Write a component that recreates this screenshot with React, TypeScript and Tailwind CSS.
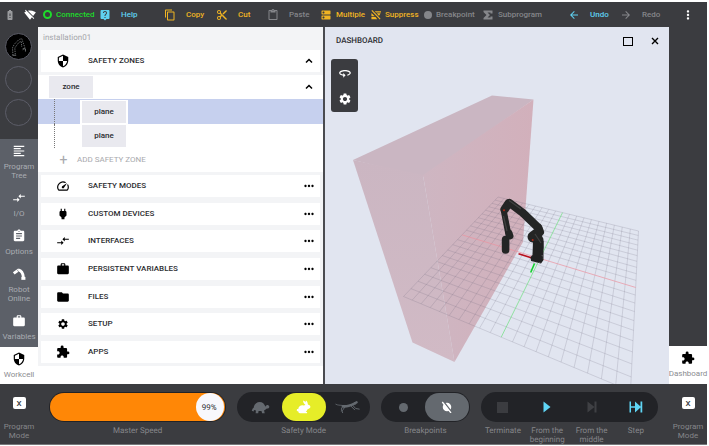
import type { ReactNode } from "react";
import {
  MdArrowBack,
  MdArrowForward,
  MdAssignment,
  MdBatteryAlert,
  MdCompareArrows,
  MdContentCut,
  MdContentPaste,
  MdDns,
  MdExtension,
  MdFolder,
  MdFormatAlignLeft,
  MdLiveHelp,
  MdMoreHoriz,
  MdMoreVert,
  MdOutlineContentCopy,
  MdPower,
  MdSecurity,
  MdSettings,
  MdSignalWifiOff,
  MdSpeed,
  MdWork,
} from "react-icons/md";

type Point = [number, number];

const FRONT_LEFT: Point = [403.5, 296.5];
const BACK_LEFT: Point = [498, 197];
const BACK_RIGHT: Point = [638.5, 231];
const FRONT_RIGHT: Point = [630.5, 391];

/* Projects floor coordinates (0..1, 0..1) onto the view. */
function project(u: number, v: number): Point {
  const [x0, y0] = FRONT_LEFT;
  const [x1, y1] = FRONT_RIGHT;
  const [x2, y2] = BACK_RIGHT;
  const [x3, y3] = BACK_LEFT;
  const dx1 = x1 - x2;
  const dx2 = x3 - x2;
  const dx3 = x0 - x1 + x2 - x3;
  const dy1 = y1 - y2;
  const dy2 = y3 - y2;
  const dy3 = y0 - y1 + y2 - y3;
  const det = dx1 * dy2 - dx2 * dy1;
  const g = (dx3 * dy2 - dx2 * dy3) / det;
  const h = (dx1 * dy3 - dx3 * dy1) / det;
  const w = g * u + h * v + 1;
  return [
    ((x1 - x0 + g * x1) * u + (x3 - x0 + h * x3) * v + x0) / w,
    ((y1 - y0 + g * y1) * u + (y3 - y0 + h * y3) * v + y0) / w,
  ];
}

function FloorLine({ from, to, color }: { from: Point; to: Point; color: string }) {
  const a = project(from[0], from[1]);
  const b = project(to[0], to[1]);
  return <line x1={a[0]} y1={a[1]} x2={b[0]} y2={b[1]} stroke={color} strokeWidth="0.7" />;
}

function Scene() {
  const steps = Array.from({ length: 21 }, (_, i) => i).filter((i) => i !== 10);
  const grid = "rgba(105,100,120,0.28)";
  return (
    <svg
      className="absolute inset-0 h-full w-full"
      viewBox="325 27 344 357"
      preserveAspectRatio="xMidYMid meet"
      role="img"
      aria-label="Robot workcell view"
    >
      <defs>
        <linearGradient id="side" x1="0" y1="0" x2="1" y2="0">
          <stop offset="0" stopColor="#ceb6c2" />
          <stop offset="1" stopColor="#d2b0bb" />
        </linearGradient>
        <linearGradient id="front" x1="0" y1="0" x2="0" y2="1">
          <stop offset="0" stopColor="#cbb6c2" />
          <stop offset="1" stopColor="#d1bac5" />
        </linearGradient>
      </defs>
      <path d="M353 160 492 95.5 533.5 99.5 423 177Z" fill="#cab6c2" />
      <path d="M353 160 423 175 454.5 362 412.5 342.5Z" fill="url(#front)" />
      <path d="M423 175 533.5 99.5 523 242 454.5 362Z" fill="url(#side)" />
      {steps.map((i) => (
        <g key={i}>
          <FloorLine from={[i / 20, 0]} to={[i / 20, 1]} color={grid} />
          <FloorLine from={[0, i / 20]} to={[1, i / 20]} color={grid} />
        </g>
      ))}
      <FloorLine from={[0, 0.5]} to={[1, 0.5]} color="#eb929f" />
      <FloorLine from={[0.5, 0]} to={[0.5, 1]} color="#6fe07f" />
      <path d="M518.5 253.7 532 258" stroke="#b80f1c" strokeWidth="1.6" />
      <path d="M534.5 263.5 530.7 272.5" stroke="#10d42b" strokeWidth="1.6" />
      <g fill="none" stroke="#242525" strokeLinecap="round" strokeLinejoin="round">
        <path d="M505.6 239.5V250" strokeWidth="7.6" />
        <path d="M504 212 508.5 235" strokeWidth="6" />
        <path d="M509 233 510 236" strokeWidth="7" />
        <path d="M504.5 209.5 508.5 203.5" strokeWidth="8.5" />
        <path d="M509.5 203 523 213 538 227.5" strokeWidth="8" />
        <path d="M538.5 228 540 232" strokeWidth="8" />
        <path d="M533 237 537 234" strokeWidth="11" />
        <path d="M538.5 240V248" strokeWidth="10" />
      </g>
      <path d="M533 241H543.5V260L541 263.5 531 261 530.5 257 532.5 255Z" fill="#202121" />
      <path d="M509 200.5 521 209M535 234 541 243M503.5 216 507 231" stroke="#414242" strokeWidth="1.2" fill="none" />
      <circle cx="504" cy="210.3" r="1" fill="#b02a17" />
      <circle cx="532.7" cy="240" r="1" fill="#b02a17" />
      <path d="M533 262 541 263M542 255 543.5 259" stroke="#8b8b8e" strokeWidth="0.6" strokeDasharray="1.5 1.5" />
    </svg>
  );
}

function RotateIcon() {
  return (
    <svg viewBox="0 0 24 24" className="size-3.5" fill="currentColor" aria-hidden="true">
      <path d="M12 7C6.480 7 2 9.240 2 12c0 2.240 2.940 4.130 7 4.770V20l4-4-4-4v2.730c-3.150-.560-5-1.900-5-2.730 0-1.060 3.040-3 8-3s8 1.940 8 3c0 .730-1.460 1.890-4 2.530v2.050c3.530-.770 6-2.530 6-4.580 0-2.760-4.480-5-10-5z" />
    </svg>
  );
}

function SigmaIcon() {
  return (
    <svg viewBox="0 0 24 24" className="size-3" fill="currentColor" aria-hidden="true">
      <path d="M3 3H21V9H17V7H11L16 12 11 17H17V15H21V21H3V18L9 12 3 6Z" />
    </svg>
  );
}

function CloseIcon() {
  return (
    <svg viewBox="0 0 12 12" className="size-3" stroke="black" strokeWidth="1.4" aria-hidden="true">
      <path d="M3 3 9 9M9 3 3 9" />
    </svg>
  );
}

function SuppressIcon() {
  return (
    <svg viewBox="0 0 24 24" className="size-2.5" fill="currentColor" aria-hidden="true">
      <path d="M1 2 3 0 23 21 21 23Z" />
      <path d="M9 3H24V6H12ZM14 8H23L20 13H18ZM1 7 9 15H1ZM1 17H11L15 22H1Z" />
    </svg>
  );
}

function RobotArmIcon() {
  return (
    <svg viewBox="0 0 24 24" className="size-3.5" aria-hidden="true">
      <path d="M3 11 12 4.500" stroke="#fff" strokeWidth="5" />
      <path d="M11 5C16 6 19 12 19.500 18" stroke="#fff" strokeWidth="5" fill="none" />
      <path d="M16 17H23V22H16Z" fill="#fff" />
      <path d="M8.500 4.500 12 9" stroke="#5c6068" strokeWidth="1" />
    </svg>
  );
}

function RobotSketch() {
  return (
    <svg viewBox="0 0 27 27" className="size-full" aria-hidden="true" fill="none" stroke="#9fa3a6" strokeWidth="0.7">
      <path d="M7.500 23 7 15 9 11 14 6 17 5 18 8 20.500 15 18 17M10 22 9.500 15 14 9 16.500 8 17 14" strokeDasharray="1.5 1" />
      <path d="M7 23H11M18 16H21V19" />
    </svg>
  );
}

function TortoiseIcon() {
  return (
    <svg viewBox="0 0 56 40" className="h-[13px] w-[19px]" fill="#64696f" aria-hidden="true">
      <path d="M7 21C8 10 16 3 25 3 34 3 41 9 43 18 45 13 49 11 52 13 56 15 56 20 53 22L46 24C44 27 42 28 39 29L41 38H33L31 31H22L21 38H13L14 29 8 28 7 32 1 30 4 23Z" />
    </svg>
  );
}

function RabbitIcon() {
  return (
    <svg viewBox="0 0 48 44" className="h-[14px] w-[15px]" fill="#fff" aria-hidden="true">
      <path d="M23 1C28 2 31 7 33 12 30 8 30 3 32 1 36 4 38 9 38 14 43 15 47 19 46 23 45 27 39 28 37 29 36 33 33 35 31 36L36 39 35 42H13C8 41 7 38 8 36 3 36 1 33 3 30 4 28 6 29 7 29 8 20 16 15 24 17 27 17 29 16 30 15 26 12 22 6 23 1Z" />
    </svg>
  );
}

function CheetahIcon() {
  return (
    <svg viewBox="0 0 76 40" className="h-[13px] w-[25px]" fill="none" stroke="#64696f" strokeLinecap="round" strokeLinejoin="round" aria-hidden="true">
      <path d="M2 10C8 14 14 12 24 14" strokeWidth="2.500" />
      <path d="M24 16C36 19 48 13 61 7" strokeWidth="8" />
      <path d="M61 7 66 4" strokeWidth="7" />
      <path d="M23 17 19 25 23 36M29 19 25 26 20 31" strokeWidth="3" />
      <path d="M54 13 63 23 74 25M49 16 60 27" strokeWidth="3" />
    </svg>
  );
}

function BreakpointOffIcon() {
  return (
    <svg viewBox="0 0 24 24" className="size-3" aria-hidden="true">
      <circle cx="12" cy="12" r="8.500" fill="#fff" />
      <path d="M5 1 22 23" stroke="#64696f" strokeWidth="3" />
      <path d="M2.500 2 20 24" stroke="#fff" strokeWidth="2.500" />
    </svg>
  );
}

function StepIcon() {
  return (
    <svg viewBox="0 0 28 24" className="h-3 w-3.5" fill="#5fd5f5" aria-hidden="true">
      <path d="M1 1H4V10.500H12V1L23 11V1H26.500V23H23V13L12 23V13.500H4V23H1Z" />
    </svg>
  );
}

function ToolButton({
  icon,
  label,
  tone,
  compact = false,
}: {
  icon: ReactNode;
  label: string;
  tone: string;
  compact?: boolean;
}) {
  return (
    <button type="button" className={`flex items-center font-medium whitespace-nowrap ${compact ? "gap-1" : "gap-2.5"} ${tone}`}>
      {icon}
      {label}
    </button>
  );
}

function Toolbar() {
  const gold = "text-[#f0b423]";
  const blue = "text-[#5fd0f0]";
  const off = "text-[#85868a]";
  return (
    <header className="flex h-[25px] shrink-0 items-center bg-[#3b3c40]">
      <div className="flex w-[43px] shrink-0 items-center gap-2 pl-1">
        <MdBatteryAlert className="size-3 text-[#9a9b9e]" />
        <MdSignalWifiOff className="size-3 text-white" />
      </div>
      <nav className="grid flex-1 grid-cols-[56fr_65fr_52fr_51fr_53fr_51fr_53fr_58fr_86fr_52fr_49fr] items-center">
        <ToolButton
          compact
          tone="text-[#1edb2b]"
          label="Connected"
          icon={<span className="size-[9px] rounded-full border-2 border-current" />}
        />
        <ToolButton tone={blue} label="Help" icon={<MdLiveHelp className="size-3" />} />
        <ToolButton tone={gold} label="Copy" icon={<MdOutlineContentCopy className="size-3" />} />
        <ToolButton tone={gold} label="Cut" icon={<MdContentCut className="size-3" />} />
        <ToolButton tone={off} label="Paste" icon={<MdContentPaste className="size-3" />} />
        <ToolButton compact tone={gold} label="Multiple" icon={<MdDns className="size-3" />} />
        <ToolButton compact tone={gold} label="Suppress" icon={<SuppressIcon />} />
        <ToolButton
          compact
          tone={off}
          label="Breakpoint"
          icon={<span className="size-2 rounded-full bg-current" />}
        />
        <ToolButton compact tone={off} label="Subprogram" icon={<SigmaIcon />} />
        <ToolButton tone={blue} label="Undo" icon={<MdArrowBack className="size-3" />} />
        <ToolButton tone={off} label="Redo" icon={<MdArrowForward className="size-3" />} />
      </nav>
      <button type="button" aria-label="More" className="flex w-[38px] shrink-0 justify-center text-white">
        <MdMoreVert className="size-3.5" />
      </button>
    </header>
  );
}

function RailItem({ icon, label, active = false }: { icon: ReactNode; label: string; active?: boolean }) {
  return (
    <button
      type="button"
      className={`flex w-full flex-col items-center gap-1 py-[5px] leading-[9px] ${
        active ? "flex-1 bg-white text-[#8b8c90]" : "text-[#a9acb2]"
      }`}
    >
      <span className={active ? "text-black" : "text-white"}>{icon}</span>
      <span>{label}</span>
    </button>
  );
}

function LeftRail() {
  return (
    <aside className="flex w-[38px] shrink-0 flex-col bg-[#3b3c40]">
      <div className="flex flex-col gap-1.5 pt-1.5 pb-[13px] pl-[5px]">
        <span className="size-[27px] overflow-hidden rounded-full border border-[#5c5d68] bg-black">
          <RobotSketch />
        </span>
        <span className="size-[27px] rounded-full border border-[#5c5d68]" />
        <span className="size-[27px] rounded-full border border-[#5c5d68]" />
      </div>
      <nav className="flex flex-1 flex-col gap-px bg-[#5c6068]">
        <RailItem icon={<MdFormatAlignLeft className="size-3.5" />} label="Program Tree" />
        <RailItem icon={<MdCompareArrows className="size-3.5" />} label="I/O" />
        <RailItem icon={<MdAssignment className="size-3.5" />} label="Options" />
        <RailItem icon={<RobotArmIcon />} label="Robot Online" />
        <RailItem icon={<MdWork className="size-3.5" />} label="Variables" />
        <RailItem active icon={<MdSecurity className="size-3.5" />} label="Workcell" />
      </nav>
    </aside>
  );
}

function Chevron() {
  return (
    <svg viewBox="0 0 14 14" className="size-3.5" fill="none" stroke="black" strokeWidth="1.5" aria-hidden="true">
      <path d="M4 8.500 7 5.500 10 8.500" />
    </svg>
  );
}

function SectionRow({ icon, label, open = false }: { icon: ReactNode; label: string; open?: boolean }) {
  return (
    <button
      type="button"
      aria-expanded={open}
      className="mx-[3px] flex h-[22px] shrink-0 items-center bg-white text-left font-medium text-[#2b2c30]"
    >
      <span className="flex w-11 justify-center text-black">{icon}</span>
      <span className="flex-1 pl-[3px]">{label}</span>
      <span className="mr-1 text-black">
        {open ? <Chevron /> : <MdMoreHoriz className="size-3.5" />}
      </span>
    </button>
  );
}

const chip = "h-[22px] w-11 bg-[#e9e9ef] font-medium text-[#2b2c30]";

function Installation() {
  return (
    <section className="flex min-w-0 flex-[285] flex-col bg-white pb-[18px]">
      <div className="flex shrink-0 flex-col bg-[#f3f4f6] pb-[3px]">
        <h1 className="pt-[5px] pb-1.5 pl-[5px] leading-3 text-[#a5a6aa]">installation01</h1>
        <SectionRow open icon={<MdSecurity className="size-3.5" />} label="SAFETY ZONES" />
      </div>
      <div className="flex shrink-0 flex-col">
        <div className="flex h-[24px] items-center justify-between pr-[7px] pl-[11px]">
          <button type="button" className={chip}>zone</button>
          <button type="button" aria-label="Collapse zone">
            <Chevron />
          </button>
        </div>
        <div className="flex h-[25px] items-center bg-[#c6d0ee] pl-4">
          <span className="h-full w-[27px] border-l border-dotted border-[#777]" />
          <button type="button" className={`${chip} box-content border border-y-0 border-white outline outline-white`}>plane</button>
        </div>
        <div className="flex h-[24px] items-center pl-4">
          <span className="h-full w-7 border-l border-dotted border-[#777]" />
          <button type="button" className={chip}>plane</button>
        </div>
        <button type="button" className="flex h-6 items-center gap-2 pl-5 text-[#a8a9ad]">
          <span className="w-[11px] text-center text-sm leading-3">+</span>
          ADD SAFETY ZONE
        </button>
      </div>
      <div className="flex flex-1 flex-col justify-between gap-1 bg-[#f3f4f6] py-[3px]">
        <SectionRow icon={<MdSpeed className="size-3.5" />} label="SAFETY MODES" />
        <SectionRow icon={<MdPower className="size-3.5" />} label="CUSTOM DEVICES" />
        <SectionRow icon={<MdCompareArrows className="size-3.5" />} label="INTERFACES" />
        <SectionRow icon={<MdWork className="size-3.5" />} label="PERSISTENT VARIABLES" />
        <SectionRow icon={<MdFolder className="size-3.5" />} label="FILES" />
        <SectionRow icon={<MdSettings className="size-3" />} label="SETUP" />
        <SectionRow icon={<MdExtension className="size-3.5" />} label="APPS" />
      </div>
    </section>
  );
}

function Dashboard() {
  return (
    <section className="relative min-w-0 flex-[344] bg-[#e1e5f0]">
      <Scene />
      <div className="relative flex h-7 items-center pr-2 pl-[11px] text-[#2b2c30]">
        <h2 className="flex-1 font-medium">DASHBOARD</h2>
        <button type="button" aria-label="Maximize" className="mr-4 h-[9px] w-2.5 border border-black" />
        <button type="button" aria-label="Close">
          <CloseIcon />
        </button>
      </div>
      <div className="relative mt-1 ml-1.5 flex w-[27px] flex-col items-center rounded-[3px] bg-[#3b3c40] text-white">
        <button type="button" aria-label="Rotate view" className="flex h-[27px] items-center">
          <RotateIcon />
        </button>
        <button type="button" aria-label="View settings" className="flex h-[26px] items-center">
          <MdSettings className="size-3.5" />
        </button>
      </div>
    </section>
  );
}

function ProgramMode() {
  return (
    <button type="button" className="flex w-[38px] shrink-0 flex-col items-center gap-[13px] pt-[13px] leading-[9px]">
      <span className="flex h-3 w-[13px] items-center justify-center rounded-xs bg-white font-medium text-[#3b3c40]">X</span>
      <span>Program Mode</span>
    </button>
  );
}

const pill = "h-[30px] rounded-full bg-[#222327]";

function ControlBar() {
  return (
    <footer className="flex h-[61px] shrink-0 items-start border-b border-[#77787b] bg-[#3b3c40] text-[#85868a]">
      <ProgramMode />
      <div className="grid flex-1 grid-cols-[4fr_3fr_2fr_4fr] gap-[11px] px-[11px] pt-2 text-center leading-[9px]">
        <div>
          <div className={`${pill} relative p-px`}>
            <input
              id="master-speed"
              type="range"
              min="0"
              max="100"
              defaultValue="99"
              className="block h-7 w-full appearance-none rounded-full bg-[#ff8706] [&::-webkit-slider-thumb]:size-7 [&::-webkit-slider-thumb]:appearance-none [&::-webkit-slider-thumb]:rounded-full [&::-webkit-slider-thumb]:bg-[#f8f8fc]"
            />
            <output htmlFor="master-speed" className="pointer-events-none absolute inset-y-px right-[3px] flex w-7 items-center justify-center text-[#2b2c30]">
              99%
            </output>
          </div>
          <label htmlFor="master-speed" className="mt-1 block">Master Speed</label>
        </div>
        <div role="group" aria-labelledby="safety-mode">
          <div className={`${pill} grid grid-cols-3 items-center p-px`}>
            <button type="button" aria-label="Slow" className="flex h-7 items-center justify-center"><TortoiseIcon /></button>
            <button type="button" aria-label="Normal" className="flex h-7 items-center justify-center rounded-full bg-[#e6ed28]"><RabbitIcon /></button>
            <button type="button" aria-label="Fast" className="flex h-7 items-center justify-center"><CheetahIcon /></button>
          </div>
          <p id="safety-mode" className="mt-1">Safety Mode</p>
        </div>
        <div role="group" aria-labelledby="breakpoints">
          <div className={`${pill} grid grid-cols-2 items-center p-px`}>
            <button type="button" aria-label="Breakpoints on" className="flex h-7 items-center justify-center">
              <span className="size-[9px] rounded-full bg-[#64696f]" />
            </button>
            <button type="button" aria-label="Breakpoints off" className="flex h-7 items-center justify-center rounded-full bg-[#64696f]"><BreakpointOffIcon /></button>
          </div>
          <p id="breakpoints" className="mt-1">Breakpoints</p>
        </div>
        <div>
          <div className={`${pill} grid grid-cols-4 items-center`}>
            <button type="button" aria-labelledby="terminate" className="flex h-7 items-center justify-center">
              <span className="size-[11px] bg-[#3b3c40]" />
            </button>
            <button type="button" aria-labelledby="beginning" className="flex h-7 items-center justify-center">
              <svg viewBox="0 0 8 12" className="h-3 w-2" fill="#5fd5f5" aria-hidden="true"><path d="M0.500 0.500 7.500 6 0.500 11.500Z" /></svg>
            </button>
            <button type="button" aria-labelledby="middle" className="flex h-7 items-center justify-center">
              <svg viewBox="0 0 10 12" className="h-3 w-2.5" fill="#3f4044" aria-hidden="true"><path d="M0.500 0.500 7.500 6V0.500H9.500V11.500H7.500V6L0.500 11.500Z" /></svg>
            </button>
            <button type="button" aria-labelledby="step" className="flex h-7 items-center justify-center"><StepIcon /></button>
          </div>
          <div className="mt-1 grid grid-cols-4">
            <span id="terminate">Terminate</span>
            <span id="beginning">From the beginning</span>
            <span id="middle">From the<br />middle</span>
            <span id="step">Step</span>
          </div>
        </div>
      </div>
      <ProgramMode />
    </footer>
  );
}

export default function App() {
  return (
    <div className="flex min-h-screen flex-col bg-white pt-0.5 pr-0.5 pb-px font-['Roboto',sans-serif] text-[8px] leading-3 [text-rendering:geometricPrecision]">
      <Toolbar />
      <main className="flex flex-1">
        <LeftRail />
        <Installation />
        <div className="w-0.5 shrink-0 bg-[#4a4b50]" />
        <Dashboard />
        <aside className="flex w-[38px] shrink-0 flex-col bg-[#3b3c40]">
          <button type="button" className="mt-auto flex h-[38px] flex-col items-center gap-1 bg-white pt-[5px] leading-[9px] text-[#8b8c90]">
            <MdExtension className="size-3.5 text-black" />
            Dashboard
          </button>
        </aside>
      </main>
      <ControlBar />
    </div>
  );
}
